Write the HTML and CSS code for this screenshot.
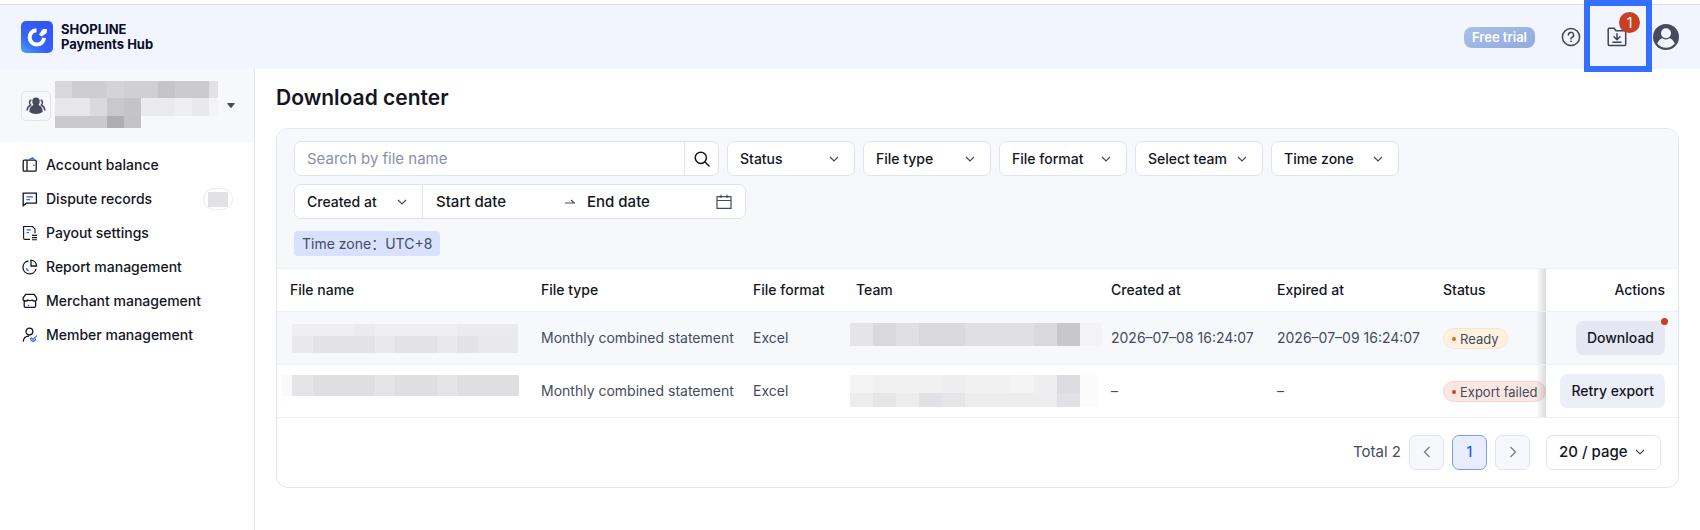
FILE: index.html
```html
<!DOCTYPE html>
<html lang="en">
<head>
  <meta charset="UTF-8" />
  <meta name="viewport" content="width=device-width, initial-scale=1" />
  <title>SHOPLINE Payments Hub - Download center</title>
  <link rel="stylesheet" href="styles.css">
</head>
<body>
  <header class="header">
    <a class="brand" href="#">
      <svg width="32" height="32" viewBox="0 0 32 32" aria-hidden="true">
        <defs>
          <linearGradient id="logoFill" x1="0" y1="1" x2="0.7" y2="0">
            <stop offset="0" stop-color="#4aa5f8" />
            <stop offset="0.4" stop-color="#3563f6" />
            <stop offset="1" stop-color="#3454f5" />
          </linearGradient>
        </defs>
        <rect width="32" height="32" rx="5" fill="url(#logoFill)" />
        <path d="M15.5 9.2A7.2 7.2 0 1 0 23 16.8" fill="none" stroke="#fff" stroke-width="4" />
        <path d="M18 13.5 21.2 8.8Q21.8 8 22.8 8H25.8V10.8Q25.8 11.8 25 12.4L20.6 15.6Z" fill="#fff" />
      </svg>
      <span>SHOPLINE<br>Payments Hub</span>
    </a>

    <div class="header-tools">
      <span class="trial">Free trial</span>
      <button class="icon-btn" type="button" aria-label="Help">
        <svg width="20" height="20" viewBox="0 0 20 20" fill="none" stroke="#3f4554" stroke-width="1.5" stroke-linecap="round">
          <circle cx="10" cy="10" r="8.6" />
          <path d="M7.4 8A2.6 2.6 0 1 1 10.9 10.4Q10 10.8 10 11.9" />
          <circle cx="10" cy="14.3" r="0.5" fill="#3f4554" stroke-width="0.8" />
        </svg>
      </button>
      <button class="icon-btn downloads" type="button" aria-label="Downloads">
        <svg width="20" height="20" viewBox="0 0 20 20" fill="none" stroke="#3f4554" stroke-width="1.5" stroke-linecap="round" stroke-linejoin="round">
          <path d="M1.2 17.3V2.3Q1.2 1.2 2.3 1.2H7.2L9 3.8H17.6Q18.7 3.8 18.7 4.9V17.3Q18.7 18.4 17.6 18.4H2.3Q1.2 18.4 1.2 17.3Z" />
          <path d="M10 6.8V12.6M7 9.8 10 12.8 13 9.8M6 15.2H14" />
        </svg>
        <span class="count">1</span>
      </button>
      <button class="icon-btn" type="button" aria-label="Profile">
        <svg width="26" height="26" viewBox="0 0 26 26">
          <circle cx="13" cy="13" r="13" fill="#454b5c" />
          <circle cx="13" cy="9.2" r="5" fill="#f2f5fe" />
          <path d="M4.2 19.6Q6.2 14.8 9.6 14.2Q13 16.600 16.4 14.2Q19.8 14.8 21.8 19.6Q18.4 23.8 13 23.8Q7.6 23.8 4.2 19.6Z" fill="#f2f5fe" />
        </svg>
      </button>
    </div>
  </header>

  <div class="layout">
    <aside class="sidebar">
      <button class="account" type="button" aria-label="Switch team">
        <span class="account-icon">
          <svg width="20" height="18" viewBox="0 0 20 18" fill="#454b5c">
            <path d="M10 .6A3.7 3.7 0 0 1 13.7 4.4Q13.7 6.5 12.5 7.9Q16.6 9.4 16.6 14V15Q14 16.9 10 16.9Q6 16.9 3.4 15V14Q3.4 9.4 7.5 7.9Q6.3 6.5 6.3 4.4A3.7 3.7 0 0 1 10 .6Z" />
            <path d="M5.4 3Q3.2 3.6 3.6 6Q3.8 7.4 4.6 8Q1.4 10 1 13.5M14.6 3Q16.8 3.6 16.4 6Q16.2 7.4 15.4 8Q18.6 10 19 13.5" fill="none" stroke="#454b5c" stroke-width="1.5" />
          </svg>
        </span>
        <svg class="account-name" width="163" height="47" viewBox="0 0 163 47" shape-rendering="crispEdges">
          <path d="M0 0h17v17h-17z" fill="#d8d8db" />
          <path d="M17 0h35v17h-35z" fill="#ceced2" />
          <path d="M52 0h17v17h-17z" fill="#d4d4d7" />
          <path d="M69 0h34v17h-34z" fill="#d0d0d3" />
          <path d="M103 0h17v17h-17z" fill="#c5c5c9" />
          <path d="M120 0h34v17h-34z" fill="#cbcbcf" />
          <path d="M154 0h9v17h-9z" fill="#e2e2e5" />
          <path d="M0 17h35v18h-35z" fill="#e7e7eb" />
          <path d="M35 17h17v18h-17z" fill="#dadade" />
          <path d="M52 17h17v18h-17z" fill="#c8c8cd" />
          <path d="M69 17h17v18h-17z" fill="#c3c3c8" />
          <path d="M86 17h34v18h-34z" fill="#eaeaee" />
          <path d="M120 17h17v18h-17z" fill="#efeff3" />
          <path d="M137 17h17v18h-17z" fill="#e9e9ed" />
          <path d="M154 17h9v18h-9z" fill="#f4f4f8" />
          <path d="M0 35h52v12h-52z" fill="#cacace" />
          <path d="M52 35h17v12h-17z" fill="#adadb2" />
          <path d="M69 35h17v12h-17z" fill="#c2c2c7" />
        </svg>
        <svg width="8" height="5" viewBox="0 0 8 5"><path d="M.8 0H7.2Q8 .2 7.5 1L4.7 4.5Q4 5 3.3 4.5L.5 1Q0 .2 .8 0Z" fill="#454b5c" /></svg>
      </button>

      <nav class="nav">
        <a href="#">
          <svg viewBox="0 0 16 16">
            <rect x="1.2" y="3.2" width="13" height="11" rx="1" />
            <path d="M5 3.2V14" />
            <path class="accent" d="M7 2.6 10.8 .9 12.4 2.8M11 8.4H12.6" />
          </svg>
          Account balance
        </a>
        <a href="#">
          <svg viewBox="0 0 16 16">
            <path d="M1.2 14.6V2.2H14.4V12.2H4.4Z" />
            <path class="accent" d="M4.4 5.8H11M4.4 8.6H8" />
          </svg>
          Dispute records
          <span class="nav-count"></span>
        </a>
        <a href="#">
          <svg viewBox="0 0 16 16">
            <path d="M8 14.4H3Q1.6 14.4 1.6 13V1.5H10.5L13 4V8.5M10 10.4H15M10 12.6H15M10 14.8H15" stroke-width="1.1" />
            <path class="accent" d="M4.5 4.8H9M4.5 7.6H7" />
          </svg>
          Payout settings
        </a>
        <a href="#">
          <svg viewBox="0 0 16 16">
            <path d="M6.5 1.8A6.6 6.6 0 1 0 14 9.8M9 1.2A6.2 6.2 0 0 1 14.6 7H9Z" />
            <path class="accent" d="M4.2 9.2Q4.8 11 6.6 11.8" />
          </svg>
          Report management
        </a>
        <a href="#">
          <svg viewBox="0 0 16 16">
            <path d="M3.6 1.4H12.2L14.6 5V7Q13.8 8.2 12.2 8Q10.8 7.8 10 7Q8 8.4 6 7Q5 8 3.8 8Q2 8 1.2 7V5ZM2.2 8V13Q2.2 14.4 3.6 14.4H12.2Q13.6 14.4 13.6 13V8" />
            <path class="accent" d="M6.5 11.6V13.2" />
          </svg>
          Merchant management
        </a>
        <a href="#">
          <svg viewBox="0 0 16 16">
            <circle cx="7.4" cy="4.6" r="3.4" />
            <path d="M1.2 14.6Q1.6 9.4 7 9.2" />
            <path class="accent" d="M15 8.6 11 12.4 9 10.4M8.4 11Q8.6 14 11 14.4Q13.4 14 13.6 11.6" stroke-width="1.1" />
          </svg>
          Member management
        </a>
      </nav>
    </aside>

    <main class="main">
      <h1>Download center</h1>

      <section class="card">
        <form class="filters">
          <div class="filter-row">
            <div class="search">
              <input type="text" aria-label="Search by file name" placeholder="Search by file name" />
              <button type="button" aria-label="Search">
                <svg width="16" height="16" viewBox="0 0 16 16" fill="none" stroke="#14161f" stroke-width="1.5" stroke-linecap="round">
                  <circle cx="6.8" cy="6.8" r="5.6" />
                  <path d="M11 11 15 15" />
                </svg>
              </button>
            </div>
            <div class="select">
              <select aria-label="Status"><option>Status</option></select>
              <svg viewBox="0 0 10 10"><path d="M1 3 5 7 9 3" /></svg>
            </div>
            <div class="select">
              <select aria-label="File type"><option>File type</option></select>
              <svg viewBox="0 0 10 10"><path d="M1 3 5 7 9 3" /></svg>
            </div>
            <div class="select">
              <select aria-label="File format"><option>File format</option></select>
              <svg viewBox="0 0 10 10"><path d="M1 3 5 7 9 3" /></svg>
            </div>
            <div class="select">
              <select aria-label="Select team"><option>Select team</option></select>
              <svg viewBox="0 0 10 10"><path d="M1 3 5 7 9 3" /></svg>
            </div>
            <div class="select">
              <select aria-label="Time zone"><option>Time zone</option></select>
              <svg viewBox="0 0 10 10"><path d="M1 3 5 7 9 3" /></svg>
            </div>
          </div>
          <div class="date-filter">
            <div class="select">
              <select aria-label="Date field"><option>Created at</option></select>
              <svg viewBox="0 0 10 10"><path d="M1 3 5 7 9 3" /></svg>
            </div>
            <div class="date-range">
              <input type="text" aria-label="Start date" placeholder="Start date" />
              <svg width="10" height="6" viewBox="0 0 10 6" fill="none" stroke="#454b5c" stroke-width="1.2"><path d="M0 4H9.5L6 1" /></svg>
              <input type="text" aria-label="End date" placeholder="End date" />
              <svg width="16" height="16" viewBox="0 0 16 16" fill="none" stroke="#454b5c" stroke-width="1.2">
                <path d="M1 2.600H15V14.400H1ZM1 6.500H15M5 .8V4M11 .8V4" />
              </svg>
            </div>
          </div>
          <span class="tag">Time zone：UTC+8</span>
        </form>

        <table>
          <colgroup>
            <col>
            <col class="col-type">
            <col class="col-format">
            <col class="col-team">
            <col class="col-date">
            <col class="col-date">
            <col class="col-status">
            <col class="col-actions">
          </colgroup>
          <thead>
            <tr>
              <th>File name</th>
              <th>File type</th>
              <th>File format</th>
              <th>Team</th>
              <th>Created at</th>
              <th>Expired at</th>
              <th>Status</th>
              <th class="actions">Actions</th>
            </tr>
          </thead>
          <tbody>
            <tr class="active">
              <td>
                <svg width="229" height="32" viewBox="0 0 229 32" shape-rendering="crispEdges">
                  <path d="M2 2h226v12h-226z" fill="#efeff3" />
                  <path d="M64 2h21v12h-21zM167 2h61v12h-61z" fill="#ebebef" />
                  <path d="M2 14h226v17h-226z" fill="#e9e9ed" />
                  <path d="M23 14h62v17h-62zM105 14h42v17h-42zM167 14h21v17h-21z" fill="#e3e3e7" />
                </svg>
              </td>
              <td>Monthly combined statement</td>
              <td>Excel</td>
              <td>
                <svg class="redacted-team" width="252" height="32" viewBox="0 0 252 32" shape-rendering="crispEdges">
                  <path d="M0 1h230v23h-230z" fill="#dfdfe4" />
                  <path d="M0 1h23v23h-23z" fill="#e4e4e9" />
                  <path d="M23 1h23v23h-23zM69 1h46v23h-46zM184 1h23v23h-23z" fill="#dadade" />
                  <path d="M207 1h23v23h-23z" fill="#c7c7cc" />
                  <path d="M230 1h22v23h-22z" fill="#f2f2f7" />
                  <path d="M0 24h252v8h-252z" fill="#f8f8fb" />
                </svg>
              </td>
              <td>2026–07–08 16:24:07</td>
              <td>2026–07–09 16:24:07</td>
              <td><span class="status ready">Ready</span></td>
              <td class="actions"><button class="btn has-dot" type="button">Download</button></td>
            </tr>
            <tr>
              <td>
                <svg class="redacted-file" width="238" height="28" viewBox="0 0 238 28" shape-rendering="crispEdges">
                  <path d="M0 0h10v21h-10z" fill="#f9f9f9" />
                  <path d="M0 21h9v6h-9z" fill="#fdfdfd" />
                  <path d="M10 0h227v21h-227z" fill="#e5e5e7" />
                  <path d="M31 0h62v21h-62zM113 0h42v21h-42zM175 0h62v21h-62z" fill="#dfdfe1" />
                </svg>
              </td>
              <td>Monthly combined statement</td>
              <td>Excel</td>
              <td>
                <svg class="redacted-team" width="252" height="32" viewBox="0 0 252 32" shape-rendering="crispEdges">
                  <path d="M0 0h207v18h-207z" fill="#f1f1f2" />
                  <path d="M0 0h23v18h-23zM161 0h23v18h-23z" fill="#f4f4f4" />
                  <path d="M92 0h23v18h-23zM184 0h23v18h-23z" fill="#eeeef0" />
                  <path d="M0 18h207v14h-207z" fill="#ededee" />
                  <path d="M23 18h23v14h-23zM92 18h23v14h-23z" fill="#e6e6e8" />
                  <path d="M69 18h23v14h-23zM207 18h23v14h-23z" fill="#e1e1e5" />
                  <path d="M207 0h23v18h-23z" fill="#dcdce1" />
                  <path d="M230 0h19v32h-19z" fill="#fbfbfb" />
                </svg>
              </td>
              <td>–</td>
              <td>–</td>
              <td><span class="status failed">Export failed</span></td>
              <td class="actions"><button class="btn" type="button">Retry export</button></td>
            </tr>
          </tbody>
        </table>

        <div class="pagination">
          <span class="total">Total 2</span>
          <button class="page" type="button" aria-label="Previous page">
            <svg width="14" height="14" viewBox="0 0 14 14"><path d="M9.5 2 4.5 7 9.5 12" /></svg>
          </button>
          <button class="page current" type="button">1</button>
          <button class="page" type="button" aria-label="Next page">
            <svg width="14" height="14" viewBox="0 0 14 14"><path d="M4.5 2 9.5 7 4.5 12" /></svg>
          </button>
          <div class="select page-size">
            <select aria-label="Rows per page"><option>20 / page</option></select>
            <svg viewBox="0 0 10 10"><path d="M1 3 5 7 9 3" /></svg>
          </div>
        </div>
      </section>
    </main>
  </div>
</body>
</html>
```
FILE: styles.css
```css
*,
*::before,
*::after {
  margin: 0;
  padding: 0;
  box-sizing: border-box;
}

body {
  background: #fff;
  color: #14161f;
  font-family: Inter, "Noto Sans CJK SC", sans-serif;
  font-size: 14px;
  line-height: 20px;
}

button,
input,
select {
  font: inherit;
  color: inherit;
}

button {
  border: none;
  background: none;
  cursor: pointer;
}

svg {
  display: block;
  flex-shrink: 0;
}

a {
  color: inherit;
  text-decoration: none;
}

/* Header */
.header {
  display: flex;
  justify-content: space-between;
  align-items: center;
  height: 65px;
  margin-top: 4px;
  padding: 0 21px;
  border-top: 1px solid #dcdde0;
  background: #f2f5fe;
}

.brand {
  display: flex;
  align-items: center;
  gap: 8px;
  color: #0a0e2a;
  font-size: 13px;
  font-weight: 700;
  line-height: 15px;
}

.header-tools {
  display: flex;
  align-items: center;
  gap: 26px;
}

.trial {
  padding: 0 8px;
  border-radius: 8px;
  background: linear-gradient(160deg, #a9c0ec, #90aadb);
  color: #fff;
  font-size: 13px;
  font-weight: 600;
  line-height: 21px;
}

.downloads {
  position: relative;
}

/* Frame that points at the downloads button */
.downloads::after {
  content: "";
  position: absolute;
  top: -27px;
  left: -23px;
  width: 68px;
  height: 72px;
  border: 6px solid #3370ff;
}

.count {
  position: absolute;
  top: -15px;
  left: 12px;
  width: 21px;
  border-radius: 50%;
  background: #c93f22;
  color: #fff;
  line-height: 21px;
}

/* Sidebar */
.layout {
  display: flex;
  min-height: calc(100vh - 69px);
}

.sidebar {
  flex: 0 0 255px;
  border-right: 1px solid #e3e6ee;
}

.account {
  display: flex;
  align-items: center;
  width: 100%;
  height: 73px;
  padding: 0 19px 0 21px;
  background: #f7f8fc;
}

.account-icon {
  display: flex;
  justify-content: center;
  align-items: center;
  width: 30px;
  height: 30px;
  border: 1px solid #e1e3ea;
  border-radius: 5px;
}

.account-name {
  margin: 0 auto 3px 4px;
}

.nav {
  padding-top: 6px;
}

.nav a {
  display: flex;
  align-items: center;
  gap: 8px;
  height: 34px;
  padding: 0 21px 0 22px;
  font-weight: 500;
}

.nav svg {
  width: 16px;
  height: 16px;
  fill: none;
  stroke: #14161f;
  stroke-width: 1.3;
}

.nav .accent {
  stroke: #3563f6;
}

.nav-count {
  display: flex;
  justify-content: center;
  align-items: center;
  width: 30px;
  height: 22px;
  margin-left: auto;
  border: 1px solid #e9eaef;
  border-radius: 11px;
}

.nav-count::before {
  content: "";
  width: 20px;
  height: 15px;
  background: #e2e2e4;
}

/* Main */
.main {
  flex: 1;
  min-width: 0;
  padding: 14px 21px 42px;
}

h1 {
  margin-bottom: 15px;
  font-size: 21px;
  font-weight: 600;
  line-height: 30px;
}

.card {
  overflow: hidden;
  border: 1px solid #e3e6ee;
  border-radius: 12px;
}

.filters {
  padding: 12px 17px;
  border-bottom: 1px solid #eceff5;
  background: #f7f8fc;
}

.filter-row {
  display: flex;
  flex-wrap: wrap;
  gap: 8px;
}

.search,
.date-filter,
.select {
  display: flex;
  align-items: center;
  height: 35px;
  border: 1px solid #e1e4ed;
  border-radius: 7px;
  background: #fff;
}

.search {
  width: 425px;
}

.search input {
  flex: 1;
  align-self: stretch;
  min-width: 0;
  padding: 0 12px;
  border: none;
  background: none;
  font-size: 15px;
}

.search input::placeholder {
  color: #8a90ab;
}

.search button {
  display: flex;
  justify-content: center;
  align-items: center;
  align-self: stretch;
  width: 34px;
  border-left: 1px solid #e1e4ed;
}

.select {
  position: relative;
  flex-shrink: 0;
  width: 128px;
}

.select select {
  width: 100%;
  height: 100%;
  padding: 0 30px 0 12px;
  border: none;
  background: none;
  font-weight: 500;
  appearance: none;
}

.select svg {
  position: absolute;
  right: 15px;
  width: 10px;
  height: 10px;
  fill: none;
  stroke: #454b5c;
  stroke-width: 1.2;
  pointer-events: none;
}

.date-filter {
  max-width: 452px;
  margin-top: 8px;
}

.date-filter .select {
  height: 100%;
  border-width: 0 1px 0 0;
  border-radius: 7px 0 0 7px;
}

.date-range {
  display: flex;
  flex: 1;
  align-items: center;
  gap: 12px;
  min-width: 0;
  padding: 0 13px;
}

.date-range input {
  flex: 1;
  min-width: 0;
  border: none;
  background: none;
  font-size: 15px;
  font-weight: 500;
}

.date-range input::placeholder {
  color: #14161f;
}

.tag {
  display: block;
  width: fit-content;
  margin-top: 12px;
  padding: 0 8px;
  border-radius: 4px;
  background: #d8e2fe;
  color: #454b5c;
  line-height: 25px;
}

/* Table */
table {
  width: 100%;
  border-collapse: collapse;
  table-layout: fixed;
}

.col-type { width: 212px; }
.col-format { width: 103px; }
.col-team { width: 255px; }
.col-date { width: 166px; }
.col-status { width: 116px; }
.col-actions { width: 132px; }

th,
td {
  padding: 0 13px;
  border-bottom: 1px solid #eef0f4;
  text-align: left;
  white-space: nowrap;
}

th {
  height: 42px;
  font-weight: 500;
}

td {
  height: 53px;
  color: #454b5c;
}

.active {
  background: #f7f8fc;
}

.actions {
  position: relative;
  text-align: right;
}

/* Shadow of the fixed column */
.actions::before {
  content: "";
  position: absolute;
  top: 0;
  bottom: 0;
  left: -10px;
  width: 10px;
  background: linear-gradient(to left, rgba(0, 0, 0, 0.15), rgba(0, 0, 0, 0));
}

.redacted-team {
  margin-left: -6px;
}

.redacted-file {
  margin: 0 0 4px -8px;
}

.status {
  display: inline-flex;
  align-items: center;
  gap: 4px;
  height: 21px;
  padding: 0 8px;
  border: 1px solid;
  border-radius: 11px;
  font-size: 13px;
}

.status::before {
  content: "";
  width: 4px;
  height: 4px;
  border-radius: 50%;
}

.ready {
  border-color: #fae5cc;
  background: #fef1e0;
}

.ready::before {
  background: #d9730f;
}

.failed {
  border-color: #f3d6cf;
  background: #fae7e2;
}

.failed::before {
  background: #c93f22;
}

.btn {
  position: relative;
  height: 34px;
  padding: 0 11px;
  border-radius: 7px;
  background: #eceff8;
  color: #14161f;
  font-weight: 500;
}

.has-dot {
  background: #e5e7f3;
}

.has-dot::after {
  content: "";
  position: absolute;
  top: -3px;
  right: -3px;
  width: 7px;
  height: 7px;
  border-radius: 50%;
  background: #c93f22;
}

/* Pagination */
.pagination {
  display: flex;
  justify-content: flex-end;
  align-items: center;
  gap: 8px;
  padding: 17px;
}

.total {
  color: #454b5c;
  font-size: 15px;
}

.page {
  display: flex;
  justify-content: center;
  align-items: center;
  width: 35px;
  height: 35px;
  border: 1px solid #e1e4ed;
  border-radius: 7px;
  background: #f7f8fc;
}

.page svg {
  fill: none;
  stroke: #70778c;
  stroke-width: 1.2;
}

.page.current {
  border-color: #7c9bf8;
  background: #e9eefe;
  color: #2f54f5;
  font-weight: 500;
}

.page-size {
  width: 115px;
  margin-left: 8px;
}

.page-size select {
  font-size: 15px;
}
```
